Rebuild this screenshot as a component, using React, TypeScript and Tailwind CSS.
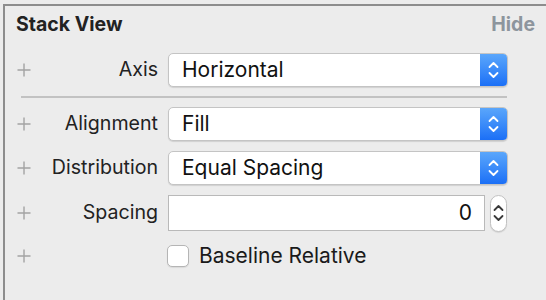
import React from 'react';

const font = { fontFamily: 'Inter, "Liberation Sans", sans-serif' };

function Plus() {
  return (
    <svg width="14" height="14" viewBox="0 0 14 14" className="shrink-0">
      <path d="M7 0.5V13.5M0.5 7H13.5" stroke="#a3a3a3" strokeWidth="1.4" />
    </svg>
  );
}

function Chevrons({ color }: { color: string }) {
  return (
    <svg width="11" height="20" viewBox="0 0 11 20">
      <path d="M1.5 7L5.5 3L9.5 7" fill="none" stroke={color} strokeWidth="1.8" strokeLinecap="round" strokeLinejoin="round" />
      <path d="M1.5 13L5.5 17L9.5 13" fill="none" stroke={color} strokeWidth="1.8" strokeLinecap="round" strokeLinejoin="round" />
    </svg>
  );
}

function Label({ text }: { text: string }) {
  return (
    <div className="w-[127px] shrink-0 text-right text-[19.6px] text-[#222222]">{text}</div>
  );
}

function PopUp({ label, value }: { label: string; value: string }) {
  return (
    <div className="flex h-[34px] items-center">
      <Plus />
      <Label text={label} />
      <div className="ml-[10px] flex h-[34px] w-[340px] overflow-hidden rounded-[5px] border border-[#c4c4c4] bg-white shadow-[0_1px_1px_rgba(0,0,0,0.12)]">
        <div className="flex flex-1 items-center pl-[13px] text-[21px] text-[#111111]">{value}</div>
        <div className="flex w-[27px] items-center justify-center bg-gradient-to-b from-[#5aa6fb] to-[#1b6ff6]">
          <Chevrons color="#ffffff" />
        </div>
      </div>
    </div>
  );
}

export default function App() {
  return (
    <div className="h-[300px] w-[546px] overflow-hidden bg-[#ececec] pt-[4px] pl-[3px]" style={font}>
      <div className="h-full border-l-2 border-t-2 border-[#8d8d8d] pl-[12px] pr-[11px]">
        <div className="-ml-[1px] flex h-[38px] items-center justify-between">
          <span className="text-[19.5px] font-bold text-[#222222]">Stack View</span>
          <span className="text-[19.5px] font-bold text-[#8d959d]">Hide</span>
        </div>

        <div className="mt-[9px]">
          <PopUp label="Axis" value="Horizontal" />
        </div>

        <div className="ml-[4px] mt-[9px] h-[2px] w-[486px] bg-[#c2c2c2]" />

        <div className="mt-[9px]">
          <PopUp label="Alignment" value="Fill" />
        </div>
        <div className="mt-[10px]">
          <PopUp label="Distribution" value="Equal Spacing" />
        </div>

        <div className="mt-[10px] flex h-[36px] items-center">
          <Plus />
          <Label text="Spacing" />
          <div className="ml-[10px] flex h-[36px] w-[317px] items-center justify-end border border-[#b9b9b9] bg-white pr-[12px] text-[21px] text-[#111111]">
            0
          </div>
          <div className="ml-[5px] flex h-[37px] w-[17px] items-center justify-center rounded-full border border-[#c2c2c2] bg-white shadow-[0_1px_1px_rgba(0,0,0,0.1)]">
            <Chevrons color="#3a3a3a" />
          </div>
        </div>

        <div className="mt-[14px] flex h-[22px] items-center">
          <Plus />
          <div className="ml-[136px] h-[22px] w-[22px] rounded-[5px] border border-[#b5b5b5] bg-white shadow-[0_1px_1px_rgba(0,0,0,0.08)]" />
          <span className="ml-[10px] text-[21px] text-[#1a1a1a]">Baseline Relative</span>
        </div>
      </div>
    </div>
  );
}
